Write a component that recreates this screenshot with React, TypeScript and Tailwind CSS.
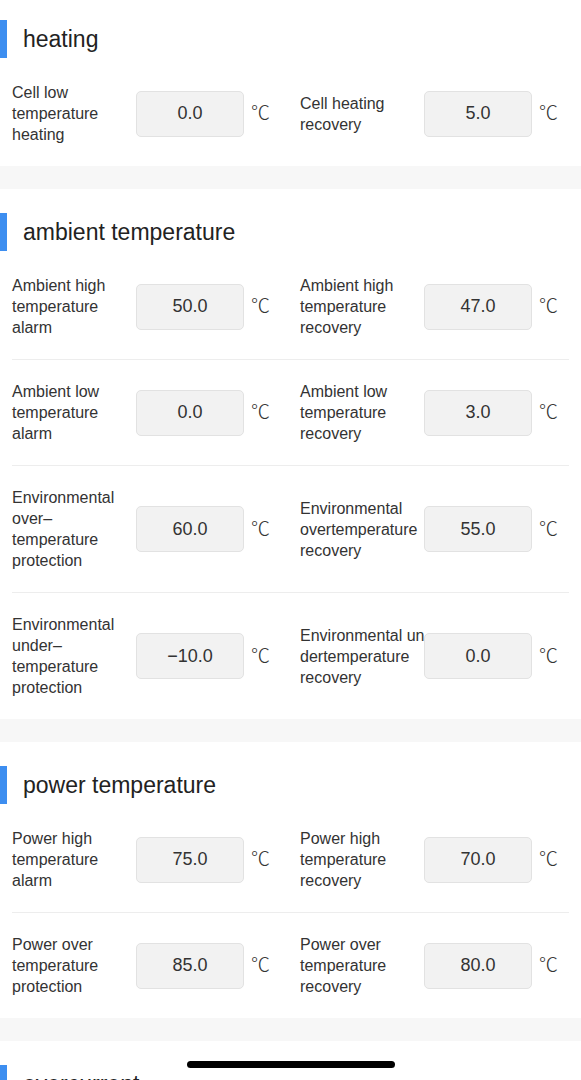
type Item = { label: string; value: string };
type Row = [Item, Item];
type Section = { title: string; rows: Row[] };

const SECTIONS: Section[] = [
  {
    title: 'heating',
    rows: [
      [
        { label: 'Cell low\ntemperature\nheating', value: '0.0' },
        { label: 'Cell heating\nrecovery', value: '5.0' },
      ],
    ],
  },
  {
    title: 'ambient temperature',
    rows: [
      [
        { label: 'Ambient high\ntemperature\nalarm', value: '50.0' },
        { label: 'Ambient high\ntemperature\nrecovery', value: '47.0' },
      ],
      [
        { label: 'Ambient low\ntemperature\nalarm', value: '0.0' },
        { label: 'Ambient low\ntemperature\nrecovery', value: '3.0' },
      ],
      [
        { label: 'Environmental\nover–\ntemperature\nprotection', value: '60.0' },
        { label: 'Environmental\novertemperature\nrecovery', value: '55.0' },
      ],
      [
        { label: 'Environmental\nunder–\ntemperature\nprotection', value: '−10.0' },
        { label: 'Environmental un\ndertemperature\nrecovery', value: '0.0' },
      ],
    ],
  },
  {
    title: 'power temperature',
    rows: [
      [
        { label: 'Power high\ntemperature\nalarm', value: '75.0' },
        { label: 'Power high\ntemperature\nrecovery', value: '70.0' },
      ],
      [
        { label: 'Power over\ntemperature\nprotection', value: '85.0' },
        { label: 'Power over\ntemperature\nrecovery', value: '80.0' },
      ],
    ],
  },
  {
    title: 'overcurrent',
    rows: [
      [
        { label: 'Charge\novercurrent\nalarm', value: '100.0' },
        { label: 'Charge\novercurrent\nrecovery', value: '95.0' },
      ],
    ],
  },
];

const Field = ({ item }: { item: Item }) => (
  <div className="flex items-center">
    <div className="w-[124px] shrink-0 whitespace-pre text-[16px] leading-[21px] text-[#333]">
      {item.label}
    </div>
    <div className="flex h-[46px] w-[108px] shrink-0 items-center justify-center rounded-[5px] border border-[#e2e2e2] bg-[#f2f2f2] text-[18px] text-[#333]">
      {item.value}
    </div>
    <span className="ml-[7px] -translate-y-[2px] text-[19px] font-light leading-none text-[#333] [font-family:'Noto_Sans_CJK_SC',sans-serif]">
      ℃
    </span>
  </div>
);

const SectionBlock = ({ section, last }: { section: Section; last: boolean }) => (
  <div>
    <div className="flex items-center pb-[3px] pt-6">
      <span className="h-[38px] w-[7px] bg-[#3d8ef0]" />
      <h2 className="ml-4 text-[23px] font-normal text-[#222]">{section.title}</h2>
    </div>
    <div className="px-3">
      {section.rows.map((row, i) => (
        <div
          key={i}
          className={`flex items-center py-[21px] ${
            i < section.rows.length - 1 ? 'border-b border-[#ededed]' : ''
          }`}
        >
          <div className="w-[288px] shrink-0">
            <Field item={row[0]} />
          </div>
          <Field item={row[1]} />
        </div>
      ))}
    </div>
    {!last && <div className="h-[23px] bg-[#f7f7f7]" />}
  </div>
);

export default function App() {
  return (
    <div className="min-h-screen bg-white font-['Liberation_Sans',Arial,sans-serif]">
      <div className="-mt-1">
        {SECTIONS.map((s, i) => (
          <SectionBlock key={s.title} section={s} last={i === SECTIONS.length - 1} />
        ))}
      </div>
      <div className="pointer-events-none fixed bottom-[12px] left-1/2 h-[7px] w-[208px] -translate-x-1/2 rounded-full bg-black" />
    </div>
  );
}
